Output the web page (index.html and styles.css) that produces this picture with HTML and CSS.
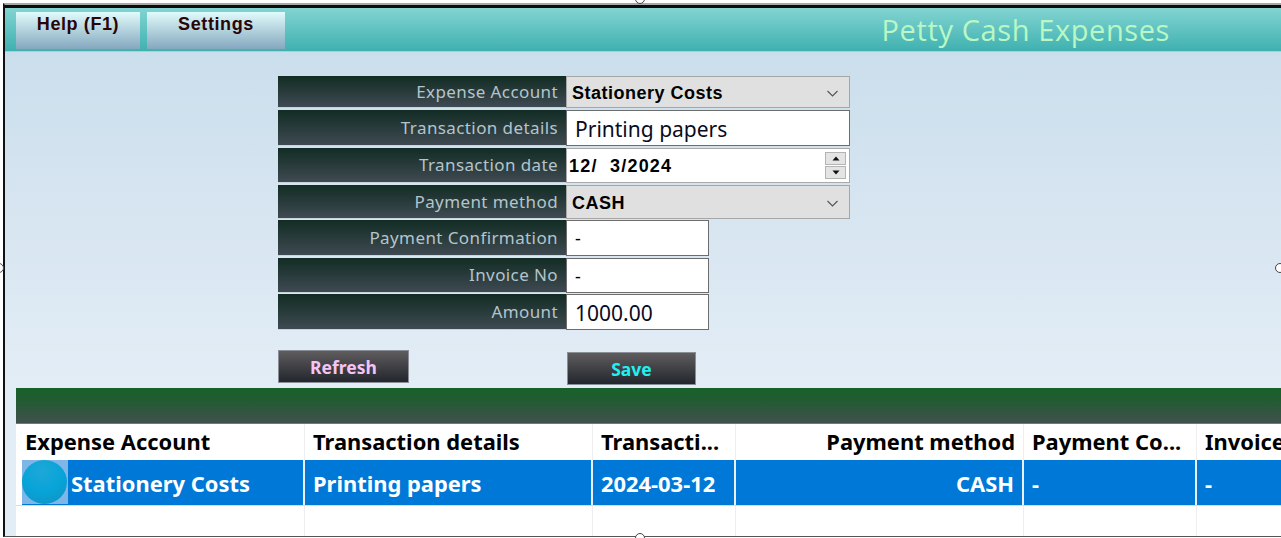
FILE: index.html
```html
<!DOCTYPE html>
<html lang="en">
<head>
<meta charset="utf-8">
<title>Petty Cash Expenses</title>
<link rel="stylesheet" href="styles.css">
</head>
<body>
<div class="window">
  <header class="topbar">
    <div class="menu">
      <div class="menu-btn help">Help (F1)</div>
      <div class="menu-btn settings">Settings</div>
    </div>
    <div class="title">Petty Cash Expenses</div>
  </header>
  <main class="content">
    <section class="form">
      <div class="row r1"><div class="label">Expense Account</div><div class="field select bold-field"><span>Stationery Costs</span><svg class="chev" viewBox="0 0 12 7"><path d="M1 1l5 5 5-5" fill="none" stroke="#555" stroke-width="1.1"/></svg></div></div>
      <div class="row r2"><div class="label">Transaction details</div><div class="field text large">Printing papers</div></div>
      <div class="row r3"><div class="label">Transaction date</div><div class="field text date"><span>12/&nbsp; 3/2024</span><div class="spin"><div class="spin-btn"><svg viewBox="0 0 8 5"><path d="M4 0.5L7.5 4.5H.5z" fill="#111"/></svg></div><div class="spin-btn"><svg viewBox="0 0 8 5"><path d="M4 4.5L7.5 .5H.5z" fill="#111"/></svg></div></div></div></div>
      <div class="row r4"><div class="label">Payment method</div><div class="field select bold-field"><span>CASH</span><svg class="chev" viewBox="0 0 12 7"><path d="M1 1l5 5 5-5" fill="none" stroke="#555" stroke-width="1.1"/></svg></div></div>
      <div class="row r5"><div class="label">Payment Confirmation</div><div class="field text short dash">-</div></div>
      <div class="row r6"><div class="label">Invoice No</div><div class="field text short dash">-</div></div>
      <div class="row r7"><div class="label">Amount</div><div class="field text short large">1000.00</div></div>
    </section>
    <section class="actions">
      <div class="action refresh">Refresh</div>
      <div class="action save">Save</div>
    </section>
    <div class="greenbar"></div>
    <section class="grid">
      <div class="grid-row head">
        <div class="cell c1">Expense Account</div>
        <div class="cell c2">Transaction details</div>
        <div class="cell c3">Transacti...</div>
        <div class="cell c4 right">Payment method</div>
        <div class="cell c5">Payment Co...</div>
        <div class="cell c6">Invoice No</div>
      </div>
      <div class="grid-row selected">
        <div class="cell c1 with-icon"><span class="orb-box"><span class="orb"></span></span>Stationery Costs</div>
        <div class="cell c2">Printing papers</div>
        <div class="cell c3">2024-03-12</div>
        <div class="cell c4 right">CASH</div>
        <div class="cell c5">-</div>
        <div class="cell c6">-</div>
      </div>
      <div class="grid-row blank">
        <div class="cell c1"></div><div class="cell c2"></div><div class="cell c3"></div><div class="cell c4"></div><div class="cell c5"></div><div class="cell c6"></div>
      </div>
    </section>
  </main>
</div>
<span class="handle h-top"></span>
<span class="handle h-bottom"></span>
<span class="handle h-left"></span>
<span class="handle h-right"></span>
</body>
</html>
```
FILE: styles.css
```css
* { box-sizing: border-box; }
html, body { margin: 0; padding: 0; }
body {
  width: 1281px; height: 538px; overflow: hidden; position: relative;
  background: #fff; font-family: "Noto Sans", "Open Sans", sans-serif;
}
.window {
  margin: 3px 0 0 3px; height: 534px; width: 1278px; overflow: hidden;
  border-top: 2px solid #a8a8a8; border-left: 2px solid #111;
  border-bottom: 1px solid #555;
  display: flex; flex-direction: column;
  background: #fff;
}
.topbar {
  flex: none; height: 47px; border-top: 3px solid #0b0b0b;
  background: linear-gradient(#82d4d2, #3fb1b0);
  border-bottom: 1px solid #9fd4da;
  display: flex; justify-content: space-between;
}
.menu { display: flex; gap: 7px; padding: 4px 0 0 11px; }
.menu-btn {
  height: 37px; background: linear-gradient(#e0fbfb, #85a8bf);
  text-align: center; color: #2a0508; font: bold 18px/24px "Liberation Sans", sans-serif; letter-spacing: .6px;
}
.help { width: 124px; }
.settings { width: 138px; }
.title {
  color: #b9f7c4; font-size: 29px; line-height: 44px; margin-right: 111px; letter-spacing: .6px; font-family: "Open Sans", sans-serif;
}
.content {
  flex: 1; min-height: 0; display: flex; flex-direction: column;
  background: linear-gradient(#cbdeec, #e3edf6 337px);
}
.form {
  padding: 24px 0 0 273px; display: flex; flex-direction: column; gap: 2px;
}
.row { display: flex; }
.r1 { height: 32px; }
.r2 { height: 36px; }
.r3 { height: 35px; }
.r4 { height: 34px; margin-bottom: -1px; }
.r5 { height: 36px; }
.r6 { height: 35px; margin-bottom: -1px; }
.r7 { height: 36px; }
.label {
  width: 288px; background: linear-gradient(#122c24, #3f4a52);
  color: #b4c4cc; font-size: 17px; letter-spacing: .4px; padding-right: 8px; line-height: 24px;
  border-bottom: 1px solid #c9d3da;
  display: flex; align-items: center; justify-content: flex-end;
}
.field { display: flex; align-items: center; color: #000; }
.select {
  width: 284px; background: #e0e0e0; border: 1px solid #a6a6a6; justify-content: space-between;
  padding: 2px 10px 0 5px;
}
.bold-field { font: bold 18px/24px "Liberation Sans", sans-serif; letter-spacing: .5px; }
.chev { width: 13px; height: 7px; }
.text { width: 284px; background: #fff; border: 1px solid #6d6d6d; padding-left: 8px; }
.short { width: 143px; }
.large { font-size: 21px; color: #0a0a20; padding-top: 2px; }
.dash { font-size: 18px; padding-left: 8px; }
.date { justify-content: space-between; padding: 0 0 0 2px; font: bold 18px/24px "Liberation Sans", sans-serif; letter-spacing: 1.2px; border-color: #aaa; }
.spin { display: flex; flex-direction: column; gap: 1px; margin-right: 3px; }
.spin-btn { width: 21px; height: 13px; background: #e4e4e4; border: 1px solid #b4b4b4; display: flex; align-items: center; justify-content: center; }
.spin-btn svg { width: 8px; height: 5px; }
.actions { flex: none; height: 58px; padding: 20px 0 0 273px; display: flex; }
.action {
  font: bold 17.5px/32px "Noto Sans", sans-serif; text-align: center;
  background: linear-gradient(#5f5c5e, #22262d); border: 1px solid #8a8f97; height: 33px;
}
.refresh { width: 131px; color: #f5c4f5; }
.save { width: 129px; color: #22f0f0; margin: 2px 0 0 158px; }
.greenbar { flex: none; height: 36px; margin-left: 11px; background: linear-gradient(#18622b, #1f5c30 30%, #42504f); border-bottom: 1px solid #6c7a7a; }
.grid { margin-left: 11px; flex: 1; background: #fff; font-weight: bold; font-size: 21.9px; }
.grid-row { display: flex; }
.head { height: 36px; color: #000; line-height: 36px; }
.selected { height: 46px; color: #fff; line-height: 48px; border-bottom: 1px solid #d5dde6; }
.selected .cell { background: #0078d7; border-right: 2px solid #e8f1fa; }
.blank { height: 30px; }
.cell { padding: 0 9px 0 8px; white-space: nowrap; overflow: hidden; border-right: 1px solid #eee; flex: none; }
.c1 { width: 289px; padding-left: 9px; }
.c2 { width: 288px; }
.c3 { width: 143px; }
.c4 { width: 288px; }
.c5 { width: 173px; }
.c6 { width: 90px; border-right: 0; }
.right { text-align: right; padding-right: 8px; }
.selected .with-icon { display: flex; padding-left: 0; margin-left: 6px; width: 283px; }
.orb-box { width: 46px; height: 44px; background: #7fb6e8; margin-right: 3px; display: flex; flex: none; }
.orb { width: 45px; height: 44px; border-radius: 50%; background: radial-gradient(circle at 45% 25%, #1fa7d8, #07a4d8 50%, #0f97c9 80%, #2b8fb4); }
.handle { position: absolute; width: 10px; height: 10px; border-radius: 50%; background: #fff; border: 1px solid #444; }
.h-top { left: 635px; top: -6px; }
.h-bottom { left: 635px; top: 533px; }
.h-left { left: -6px; top: 263px; }
.h-right { left: 1275px; top: 263px; }
```
